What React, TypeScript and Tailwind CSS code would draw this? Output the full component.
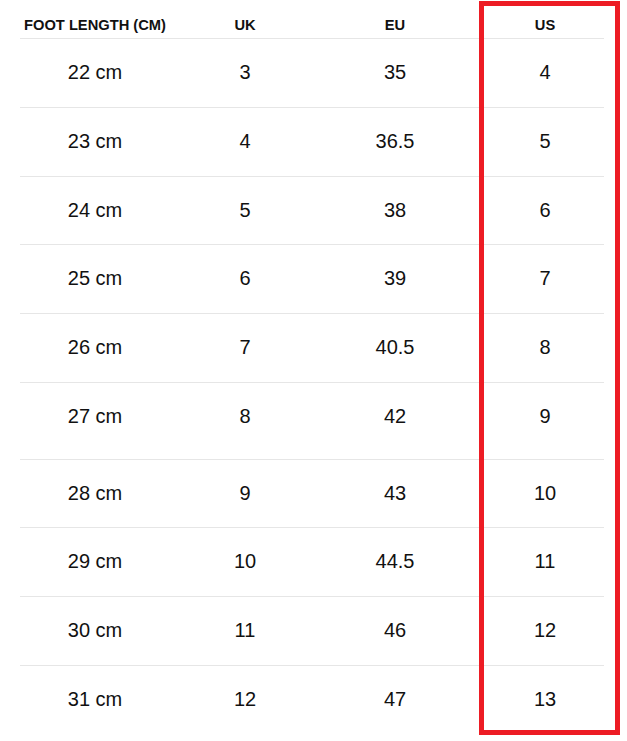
import React from "react";

const rows: { cm: string; uk: string; eu: string; us: string; h: string }[] = [
  { cm: "22 cm", uk: "3", eu: "35", us: "4", h: "h-[69px]" },
  { cm: "23 cm", uk: "4", eu: "36.5", us: "5", h: "h-[69px]" },
  { cm: "24 cm", uk: "5", eu: "38", us: "6", h: "h-[68px]" },
  { cm: "25 cm", uk: "6", eu: "39", us: "7", h: "h-[69px]" },
  { cm: "26 cm", uk: "7", eu: "40.5", us: "8", h: "h-[69px]" },
  { cm: "27 cm", uk: "8", eu: "42", us: "9", h: "h-[77px]" },
  { cm: "28 cm", uk: "9", eu: "43", us: "10", h: "h-[68px]" },
  { cm: "29 cm", uk: "10", eu: "44.5", us: "11", h: "h-[69px]" },
  { cm: "30 cm", uk: "11", eu: "46", us: "12", h: "h-[69px]" },
  { cm: "31 cm", uk: "12", eu: "47", us: "13", h: "h-[69px]" },
];

export default function App() {
  return (
    <div
      className="relative w-[627px] h-[741px] bg-white text-[#111] overflow-hidden"
      style={{ fontFamily: '"Liberation Sans", Arial, sans-serif' }}
    >
      <div className="pl-[20px]">
        <div className="w-[584px]">
          <div className="grid grid-cols-[150px_150px_150px_150px] h-[39px] border-b border-[#e6e6e6] items-start pt-[16px] text-[14.7px] font-bold leading-[18px]">
            <div className="text-center whitespace-nowrap">FOOT LENGTH (CM)</div>
            <div className="text-center">UK</div>
            <div className="text-center">EU</div>
            <div className="text-center">US</div>
          </div>
          {rows.map((r, i) => (
            <div
              key={r.cm}
              className={`grid grid-cols-[150px_150px_150px_150px] ${r.h} ${
                i < rows.length - 1 ? "border-b border-[#e6e6e6]" : ""
              } items-start pt-[21px] text-[20px] leading-[24px]`}
            >
              <div className="text-center">{r.cm}</div>
              <div className="text-center">{r.uk}</div>
              <div className="text-center">{r.eu}</div>
              <div className="text-center">{r.us}</div>
            </div>
          ))}
        </div>
      </div>
      <div className="absolute left-[479px] top-[1px] w-[141px] h-[734px] border-[5px] border-[#ed1c24]" />
    </div>
  );
}
